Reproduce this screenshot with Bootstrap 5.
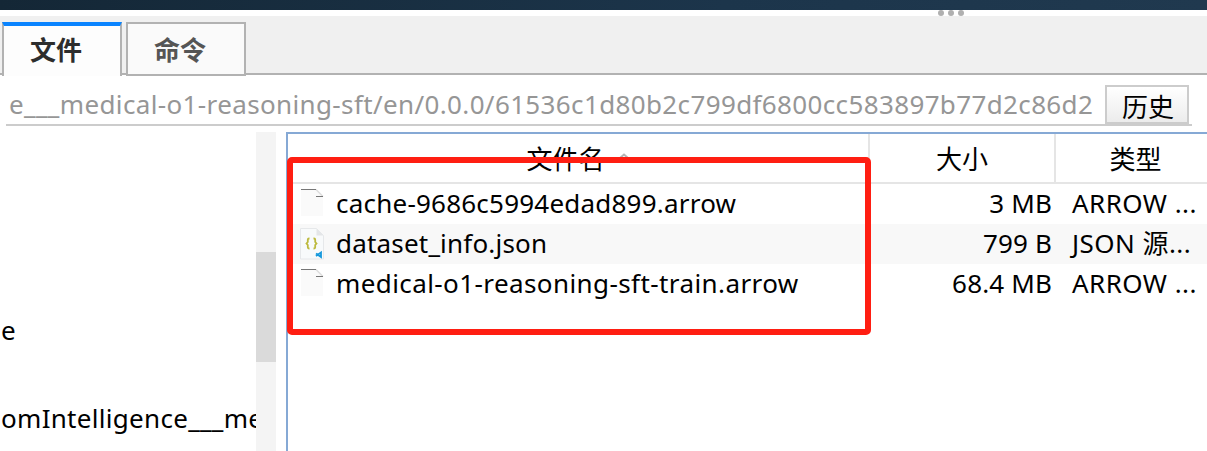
<!DOCTYPE html>
<html lang="zh-CN">
<head>
<meta charset="utf-8">
<meta name="viewport" content="width=device-width, initial-scale=1">
<title>文件</title>
<link href="https://cdn.jsdelivr.net/npm/bootstrap@5.3.0/dist/css/bootstrap.min.css" rel="stylesheet">
<style>
body{height:451px;font:26px/40px "Noto Sans","Noto Sans CJK SC",sans-serif;color:#000;background:#fff}
.wall{height:10px;background:linear-gradient(90deg,#142736,#1c354b 60%,#20394f)}
.grip{height:6px;padding-left:938px;gap:4px}
.grip i{width:6px;height:6px;border-radius:50%;background:#b0b0b0}
.tabs{height:59px;padding:6px 0 0 2px;gap:4px;background:#f0f0f0;box-shadow:inset 0 -2px #b2b2b2}
.tab{width:120px;height:54px;border:2px solid #b2b2b2;background:#fafafa;color:#555;font-weight:700;padding-left:26px;line-height:53px;border-radius:0}
.tab.on{border-top:4px solid #0a84ff;border-bottom:0;background:#fdfdfd;color:#2d2d2d;padding-left:26px;line-height:49px;height:54px}
.path{width:1186px;height:51px;margin-left:6px;border-bottom:2px solid #ccc;padding:10px 3px 0 3px}
.path .addr{color:#969696;line-height:39px;letter-spacing:.365px}
.hist{width:84px;height:39px;border:2px solid #ccc;background:linear-gradient(#fff,#ececec);line-height:40px;padding:0 0 0 2px;text-align:center}
.panes{height:319px;margin-top:6px}
.tree{width:256px;padding:178px 0 0 1px;letter-spacing:.3px}
.tree div{height:88px}
.track{width:20px;background:#f4f4f4;padding-top:120px}
.track div{height:110px;background:#dadada}
.list{margin-left:10px;border:2px solid #86a9d5;border-width:2px 0 0 2px}
.cols{display:grid;grid-template-columns:582px 186px 1fr}
.head{height:50px;line-height:50px;border-bottom:2px solid #e5e5e5;text-align:center}
.head>div{border-right:2px solid #e5e5e5;height:48px}
.head>div:last-child{border:0}
.head .kt{padding-left:8px}
.ttl{padding-left:3px}
.file{height:40px;line-height:39px}
.file.alt{background:#f8f8f8}
.fname{padding-left:12px;gap:12px}
.size{text-align:right;padding-right:4px;letter-spacing:.15px}
.kind{padding-left:16px;letter-spacing:.45px}
.n1{letter-spacing:.22px}
.n2{letter-spacing:.19px}
.n3{letter-spacing:.41px}
.sort{margin-left:10px;margin-top:18px}
.frame{left:-1px;top:23px;width:584px;height:178px;border:6px solid #ff1e12;border-radius:5px}
</style>
</head>
<body class="overflow-hidden m-0">
<div class="wall"></div>
<div class="grip d-flex"><i></i><i></i><i></i></div>
<nav class="tabs d-flex"><div class="tab on">文件</div><div class="tab">命令</div></nav>
<div class="path d-flex justify-content-between">
  <div class="addr text-nowrap">e___medical-o1-reasoning-sft/en/0.0.0/61536c1d80b2c799df6800cc583897b77d2c86d2</div>
  <div class="hist flex-shrink-0">历史</div>
</div>
<main class="panes d-flex">
  <div class="tree overflow-hidden flex-shrink-0 text-nowrap"><div>e</div><div>omIntelligence___me</div></div>
  <div class="track flex-shrink-0"><div></div></div>
  <section class="list flex-grow-1 position-relative">
    <div class="head cols"><div class="d-flex justify-content-center"><span class="ttl">文件名</span><svg class="sort" width="18" height="10"><path d="M5 6 9 2.500l4 3.500" fill="none" stroke="#b5b5b5" stroke-width="2"/></svg></div><div>大小</div><div class="kt">类型</div></div>
    <div class="file cols"><div class="fname d-flex"><svg width="24" height="40"><path d="M1 6h15l7 7v19H1z" fill="#fafafa"/><path d="M16 5.500l7 7" stroke="#ddd" stroke-width="1.5"/><path d="M1 5.500h15M16 12.500h7" stroke="#777"/></svg><span class="n1">cache-9686c5994edad899.arrow</span></div><div class="size">3 MB</div><div class="kind">ARROW ...</div></div>
    <div class="file alt cols"><div class="fname d-flex"><svg width="24" height="40"><path d="M.5 4.500h16l7 7v23.500H.5z" fill="#f8fafb" stroke="#e6e8ea"/><path d="M16.500 4.500v7h7z" fill="#e4e6e8"/><path d="M9.500 14.500H9q-1.200 0-1.200 1.200v2.300l-1.300 1.500 1.300 1.500v2.300q0 1.200 1.200 1.200h.5M13.500 14.500h.5q1.200 0 1.200 1.200v2.300l1.300 1.500-1.300 1.500v2.300q0 1.200-1.200 1.200h-.5" fill="none" stroke="#bcb93c" stroke-width="1.800"/><path d="M16 29.500l5 3.500v-4.500l-5 3.500" fill="none" stroke="#1598dc" stroke-width="1.800"/></svg><span class="n2">dataset_info.json</span></div><div class="size">799 B</div><div class="kind">JSON 源...</div></div>
    <div class="file cols"><div class="fname d-flex"><svg width="24" height="40"><path d="M1 6h15l7 7v19H1z" fill="#fafafa"/><path d="M16 5.500l7 7" stroke="#ddd" stroke-width="1.500"/><path d="M1 5.500h15M16 12.500h7" stroke="#777"/></svg><span class="n3">medical-o1-reasoning-sft-train.arrow</span></div><div class="size">68.4 MB</div><div class="kind">ARROW ...</div></div>
    <div class="frame position-absolute"></div>
  </section>
</main>
<script src="https://cdn.jsdelivr.net/npm/bootstrap@5.3.0/dist/js/bootstrap.bundle.min.js"></script>
</body>
</html>
